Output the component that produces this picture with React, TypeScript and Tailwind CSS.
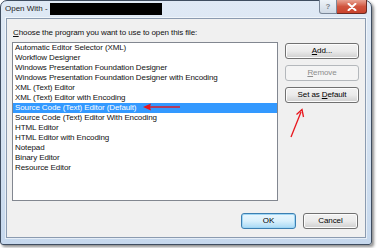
import React from "react";

const ITEMS = [
  "Automatic Editor Selector (XML)",
  "Workflow Designer",
  "Windows Presentation Foundation Designer",
  "Windows Presentation Foundation Designer with Encoding",
  "XML (Text) Editor",
  "XML (Text) Editor with Encoding",
  "Source Code (Text) Editor (Default)",
  "Source Code (Text) Editor With Encoding",
  "HTML Editor",
  "HTML Editor with Encoding",
  "Notepad",
  "Binary Editor",
  "Resource Editor",
];
const SELECTED = 6;

function Btn({ children, kind = "normal", className = "" }: { children: React.ReactNode; kind?: "normal" | "default" | "disabled"; className?: string }) {
  const look =
    kind === "disabled"
      ? "border-[#b4b8bc] bg-[#f4f4f4] text-[#8d8d8d]"
      : kind === "default"
      ? "border-[#3c7fb1] bg-gradient-to-b from-[#eaf6fd] via-[#d9f0fc] to-[#a7d9f5] text-black shadow-[inset_0_0_0_1px_#9fd6f5]"
      : "border-[#707070] bg-gradient-to-b from-[#f2f2f2] via-[#ebebeb] to-[#cfcfcf] text-black shadow-[inset_0_0_0_1px_#fcfcfc]";
  return <div className={`h-[16px] rounded-[3px] border flex items-center justify-center leading-none ${look} ${className}`}>{children}</div>;
}

export default function App() {
  return (
    <div className="w-[377px] h-[248px] bg-white relative font-['Liberation_Sans',Arial,sans-serif] text-[8px] tracking-[-0.1px] text-[#111]">
      <div className="w-[372px] h-[245px] rounded-t-[7px] rounded-b-[3px] border border-[#3f4d60] bg-gradient-to-b from-[#dfe9f5] via-[#d6e3f1] to-[#c6d8ed] shadow-[2px_2px_3px_rgba(0,0,0,0.45)] flex flex-col px-[5px] pb-[6px]">
        {/* Title bar */}
        <div className="h-[17px] flex items-start">
          <span className="mt-[3px] leading-[10px] text-[#1e1e1e] -ml-[1px] tracking-normal">Open With -</span>
          <div className="w-[112px] h-[12px] bg-black mt-[2px] ml-[2px]" />
          <div className="ml-auto -mt-[1px] -mr-[1px] flex">
            <div className="w-[18px] h-[14px] rounded-bl-[3px] border border-t-0 border-[#7a8798] bg-gradient-to-b from-[#eef3f8] to-[#cfd9e5] flex items-center justify-center text-[8px] font-bold text-[#7a828c]">?</div>
            <div className="w-[30px] h-[14px] rounded-br-[3px] border border-t-0 border-l-0 border-[#6b2a22] bg-gradient-to-b from-[#e8a393] via-[#d0553f] to-[#c9432c] flex items-center justify-center">
              <svg width="10" height="8" viewBox="0 0 10 8"><path d="M1.5 0.8 L8.5 7.2 M8.5 0.8 L1.5 7.2" stroke="#fff" strokeWidth="2" strokeLinecap="round" /></svg>
            </div>
          </div>
        </div>

        {/* Client area */}
        <div className="flex-1 bg-[#f0f0f0] border border-[#8b9bb0] shadow-[0_0_0_1px_rgba(255,255,255,0.55)] flex flex-col pl-[5px] pr-[6px]">
          <div className="mt-[9px] h-[10px] leading-[10px] pl-[1px]">
            <span className="underline">C</span>hoose the program you want to use to open this file:
          </div>
          <div className="mt-[4px] flex items-start">
            <div className="w-[266px] h-[159px] border border-[#828790] bg-white flex flex-col">
              {ITEMS.map((it, i) => (
                <div key={it} className={`h-[10px] leading-[10px] pl-[2px] whitespace-nowrap ${i === SELECTED ? "bg-[#3399ff] text-white" : ""}`}>{it}</div>
              ))}
            </div>
            <div className="ml-[7px] mt-[1px] w-[74px] flex flex-col gap-[6px]">
              <Btn><span className="underline">A</span>dd...</Btn>
              <Btn kind="disabled"><span className="underline">R</span>emove</Btn>
              <Btn>Set as&nbsp;<span className="underline">D</span>efault</Btn>
            </div>
          </div>
          <div className="mt-[12px] flex justify-end gap-[7px] pr-[1px]">
            <Btn kind="default" className="w-[55px]">OK</Btn>
            <Btn className="w-[55px]">Cancel</Btn>
          </div>
        </div>
      </div>

      {/* Red annotation arrows */}
      <svg className="absolute left-0 top-0 pointer-events-none" width="377" height="248" viewBox="0 0 377 248">
        <path d="M148 107 L180 107" stroke="#e8141b" strokeWidth="1.4" />
        <path d="M143 107 L151 103.5 L150 107 L151 110.5 Z" fill="#e8141b" />
        <path d="M291 137 L301 112" stroke="#e8141b" strokeWidth="1.3" />
        <path d="M296.5 114.5 L302 109.5 L303.5 117" stroke="#e8141b" strokeWidth="1.3" fill="none" />
      </svg>
    </div>
  );
}
